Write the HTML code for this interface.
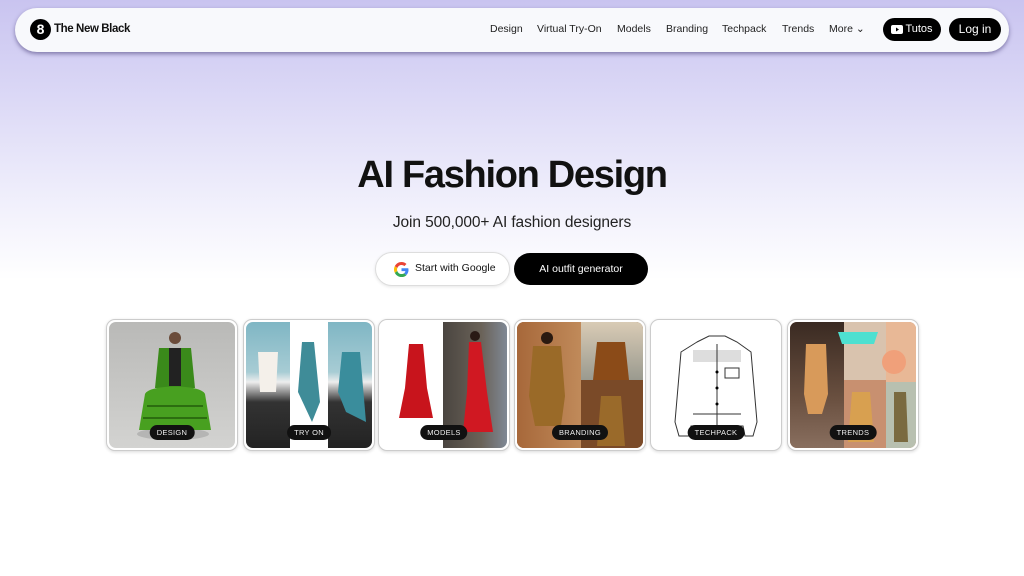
<!DOCTYPE html>
<html><head><meta charset="utf-8"><style>
*{margin:0;padding:0;box-sizing:border-box}
body{width:1024px;height:576px;overflow:hidden;font-family:"Liberation Sans",sans-serif;background:linear-gradient(#c9c4f0 0px,#dcd9f6 100px,#eeedfb 190px,#fff 280px,#fff 576px);position:relative;color:#111}
.nav{position:absolute;left:15px;top:8px;width:994px;height:44px;border-radius:22px;background:#f8f9fc;box-shadow:0 2px 4px rgba(60,50,110,.55)}
.logo{position:absolute;left:15px;top:11px;width:21px;height:21px;border-radius:50%;background:#000;color:#fff;font-weight:bold;font-size:14px;text-align:center;line-height:21px}
.brand{position:absolute;left:39px;top:15px;font-size:11.5px;font-weight:bold;letter-spacing:-.4px}
.links{position:absolute;top:15px;font-size:10.5px;color:#222}
.links span{position:absolute;white-space:nowrap}
.btn{position:absolute;background:#000;color:#fff;border-radius:12px;font-size:11.5px;text-align:center}
h1{position:absolute;left:0;width:1024px;top:154px;text-align:center;font-size:38px;letter-spacing:-1.3px;font-weight:bold}
.sub{position:absolute;left:0;width:1024px;top:214px;text-align:center;font-size:15.5px;color:#222;letter-spacing:-.1px}
.g{position:absolute;left:375px;top:252px;width:135px;height:34px;border-radius:17px;background:#fff;border:1.5px solid #ddd;box-shadow:0 1px 3px rgba(0,0,0,.1);font-size:10.5px;line-height:31px;padding-left:39px}
.o{position:absolute;left:514px;top:253px;width:134px;height:32px;border-radius:16px;background:#000;color:#fff;font-size:10.5px;line-height:32px;text-align:center}
.card{position:absolute;top:319px;width:132px;height:132px;border-radius:9px;background:#fff;border:1px solid #ccc;box-shadow:0 1px 3px rgba(0,0,0,.15);padding:2px}
.in{width:100%;height:100%;border-radius:7px;overflow:hidden;position:relative}
.tag{position:absolute;bottom:8px;left:50%;transform:translateX(-50%);background:#111;color:#eee;font-size:7.5px;padding:3px 7px;border-radius:8px;letter-spacing:.3px;white-space:nowrap}
</style></head><body>
<div class="nav">
 <div class="logo">8</div>
 <div class="brand">The New Black</div>
 <div class="links">
  <span style="left:475px">Design</span>
  <span style="left:522px">Virtual Try-On</span>
  <span style="left:602px">Models</span>
  <span style="left:651px">Branding</span>
  <span style="left:707px">Techpack</span>
  <span style="left:767px">Trends</span>
  <span style="left:814px">More &#8964;</span>
 </div>
 <div class="btn" style="left:868px;top:10px;width:58px;height:23px;line-height:23px;padding-left:14px;font-size:11px"><svg style="position:absolute;left:8px;top:7px" width="12" height="9"><rect width="12" height="9" rx="2" fill="#fff"/><path d="M5 2.5L8 4.5 5 6.5Z" fill="#000"/></svg>Tutos</div>
 <div class="btn" style="left:934px;top:10px;width:52px;height:23px;line-height:23px;font-size:12px">Log in</div>
</div>
<h1>AI Fashion Design</h1>
<div class="sub">Join 500,000+ AI fashion designers</div>
<div class="g"><svg style="position:absolute;left:18px;top:9px" width="15" height="15" viewBox="0 0 48 48"><path fill="#EA4335" d="M24 9.5c3.5 0 6.6 1.2 9.1 3.6l6.8-6.8C35.8 2.4 30.3 0 24 0 14.6 0 6.6 5.4 2.7 13.3l7.9 6.1C12.5 13.7 17.8 9.5 24 9.5z"/><path fill="#4285F4" d="M46.1 24.5c0-1.6-.1-3.1-.4-4.5H24v9h12.4c-.5 2.900-2.2 5.3-4.6 7l7.7 6c4.5-4.2 7.1-10.3 7.1-17.5z"/><path fill="#FBBC05" d="M10.5 28.6c-.5-1.4-.8-3-.8-4.6s.3-3.2.8-4.6l-7.9-6.1C1 16.6 0 20.2 0 24s1 7.4 2.7 10.7l7.8-6.1z"/><path fill="#34A853" d="M24 48c6.5 0 11.9-2.1 15.9-5.8l-7.7-6c-2.1 1.4-4.9 2.3-8.2 2.3-6.2 0-11.5-4.2-13.4-9.9l-7.9 6.1C6.6 42.6 14.6 48 24 48z"/></svg>Start with Google</div>
<div class="o">AI outfit generator</div>

<div class="card" style="left:106px"><div class="in" style="background:linear-gradient(#b9b9b7,#d3d3d1)">
 <svg width="128" height="128"><ellipse cx="64" cy="112" rx="36" ry="6" fill="#999" opacity=".5"/><circle cx="66" cy="16" r="6" fill="#6b4c3b"/><path d="M50 26h32l4 40H46z" fill="#3a8a1a"/><path d="M60 26h12v38H60z" fill="#222"/><path d="M36 72c4-10 56-10 60 0l6 36H30z" fill="#48a020"/><path d="M38 84h56M34 96h64" stroke="#2c6d10" stroke-width="2"/></svg>
 <div class="tag">DESIGN</div></div></div>

<div class="card" style="left:243px"><div class="in" style="background:#fff">
 <div style="position:absolute;left:0;top:0;width:44px;height:128px;background:linear-gradient(#7fb6c4 0,#a7ccd4 50px,#eee 60px,#333 80px,#222)"></div>
 <div style="position:absolute;right:0;top:0;width:44px;height:128px;background:linear-gradient(#7fb6c4 0,#a7ccd4 50px,#eee 60px,#333 80px,#222)"></div>
 <svg width="128" height="128" style="position:absolute;left:0;top:0"><path d="M12 30h20l-2 40H14z" fill="#f4f0ea"/><path d="M56 20h12l6 60-8 20-14-30z" fill="#3f8c98"/><path d="M96 30h18l6 70-20-10-8-20z" fill="#3a8d9c"/></svg>
 <div class="tag">TRY ON</div></div></div>

<div class="card" style="left:378px"><div class="in" style="background:#fff">
 <div style="position:absolute;right:0;top:0;width:64px;height:128px;background:linear-gradient(90deg,#4a4540,#6a6258 60%,#7f8895)"></div>
 <svg width="128" height="128" style="position:absolute;left:0;top:0"><path d="M28 22h14l4 44 6 30H18l6-30z" fill="#c8141c"/><path d="M88 20h12l6 50 6 40H82l4-40z" fill="#d01822"/><circle cx="94" cy="14" r="5" fill="#2a1a15"/></svg>
 <div class="tag">MODELS</div></div></div>

<div class="card" style="left:514px"><div class="in" style="background:#8a5a30">
 <div style="position:absolute;left:0;top:0;width:64px;height:128px;background:linear-gradient(90deg,#a7683a,#c08a5a)"></div>
 <div style="position:absolute;left:64px;top:0;width:64px;height:58px;background:linear-gradient(#d9cbb5,#9a9a8f)"></div>
 <div style="position:absolute;left:64px;top:58px;width:64px;height:70px;background:#7a4a28"></div>
 <svg width="128" height="128" style="position:absolute;left:0;top:0"><path d="M16 24h28l4 50-4 30H18l-6-30z" fill="#9a6a28"/><circle cx="30" cy="16" r="6" fill="#2a1a10"/><path d="M80 20h28l4 38H76z" fill="#8b4b18"/><path d="M84 74h20l4 50H80z" fill="#9a6a2a"/></svg>
 <div class="tag">BRANDING</div></div></div>

<div class="card" style="left:650px"><div class="in" style="background:#fff">
 <svg width="128" height="128"><path d="M44 20l12-6h16l12 6 14 10 6 70-4 14H92l-2-10H38l-2 10H26l-4-14 6-70z" fill="#fff" stroke="#333" stroke-width="1"/><path d="M40 28h48v12H40z" fill="#ddd"/><path d="M64 22v86M40 92h48M72 46h14v10H72z" stroke="#333" fill="none"/><circle cx="64" cy="50" r="1.5"/><circle cx="64" cy="66" r="1.5"/><circle cx="64" cy="82" r="1.5"/></svg>
 <div class="tag">TECHPACK</div></div></div>

<div class="card" style="left:787px"><div class="in" style="background:#c89070">
 <div style="position:absolute;left:0;top:0;width:54px;height:128px;background:linear-gradient(#3a2a22,#6a5040 60%,#8a7060)"></div>
 <div style="position:absolute;left:54px;top:0;width:42px;height:58px;background:#d9c3ae"></div>
 <div style="position:absolute;left:96px;top:0;width:32px;height:60px;background:#e8b896"></div>
 <div style="position:absolute;left:96px;top:60px;width:32px;height:68px;background:#b8c0b0"></div>
 <svg width="128" height="128" style="position:absolute;left:0;top:0"><path d="M16 22h20l2 50-6 20H18l-4-20z" fill="#d89a5a"/><path d="M48 10h40l-4 12H52z" fill="#4ee0d0"/><circle cx="104" cy="40" r="12" fill="#f0a07a"/><path d="M62 70h18l4 50H58z" fill="#d8a050"/><path d="M104 70h12l2 50h-14z" fill="#7a6a40"/></svg>
 <div class="tag">TRENDS</div></div></div>
</body></html>
